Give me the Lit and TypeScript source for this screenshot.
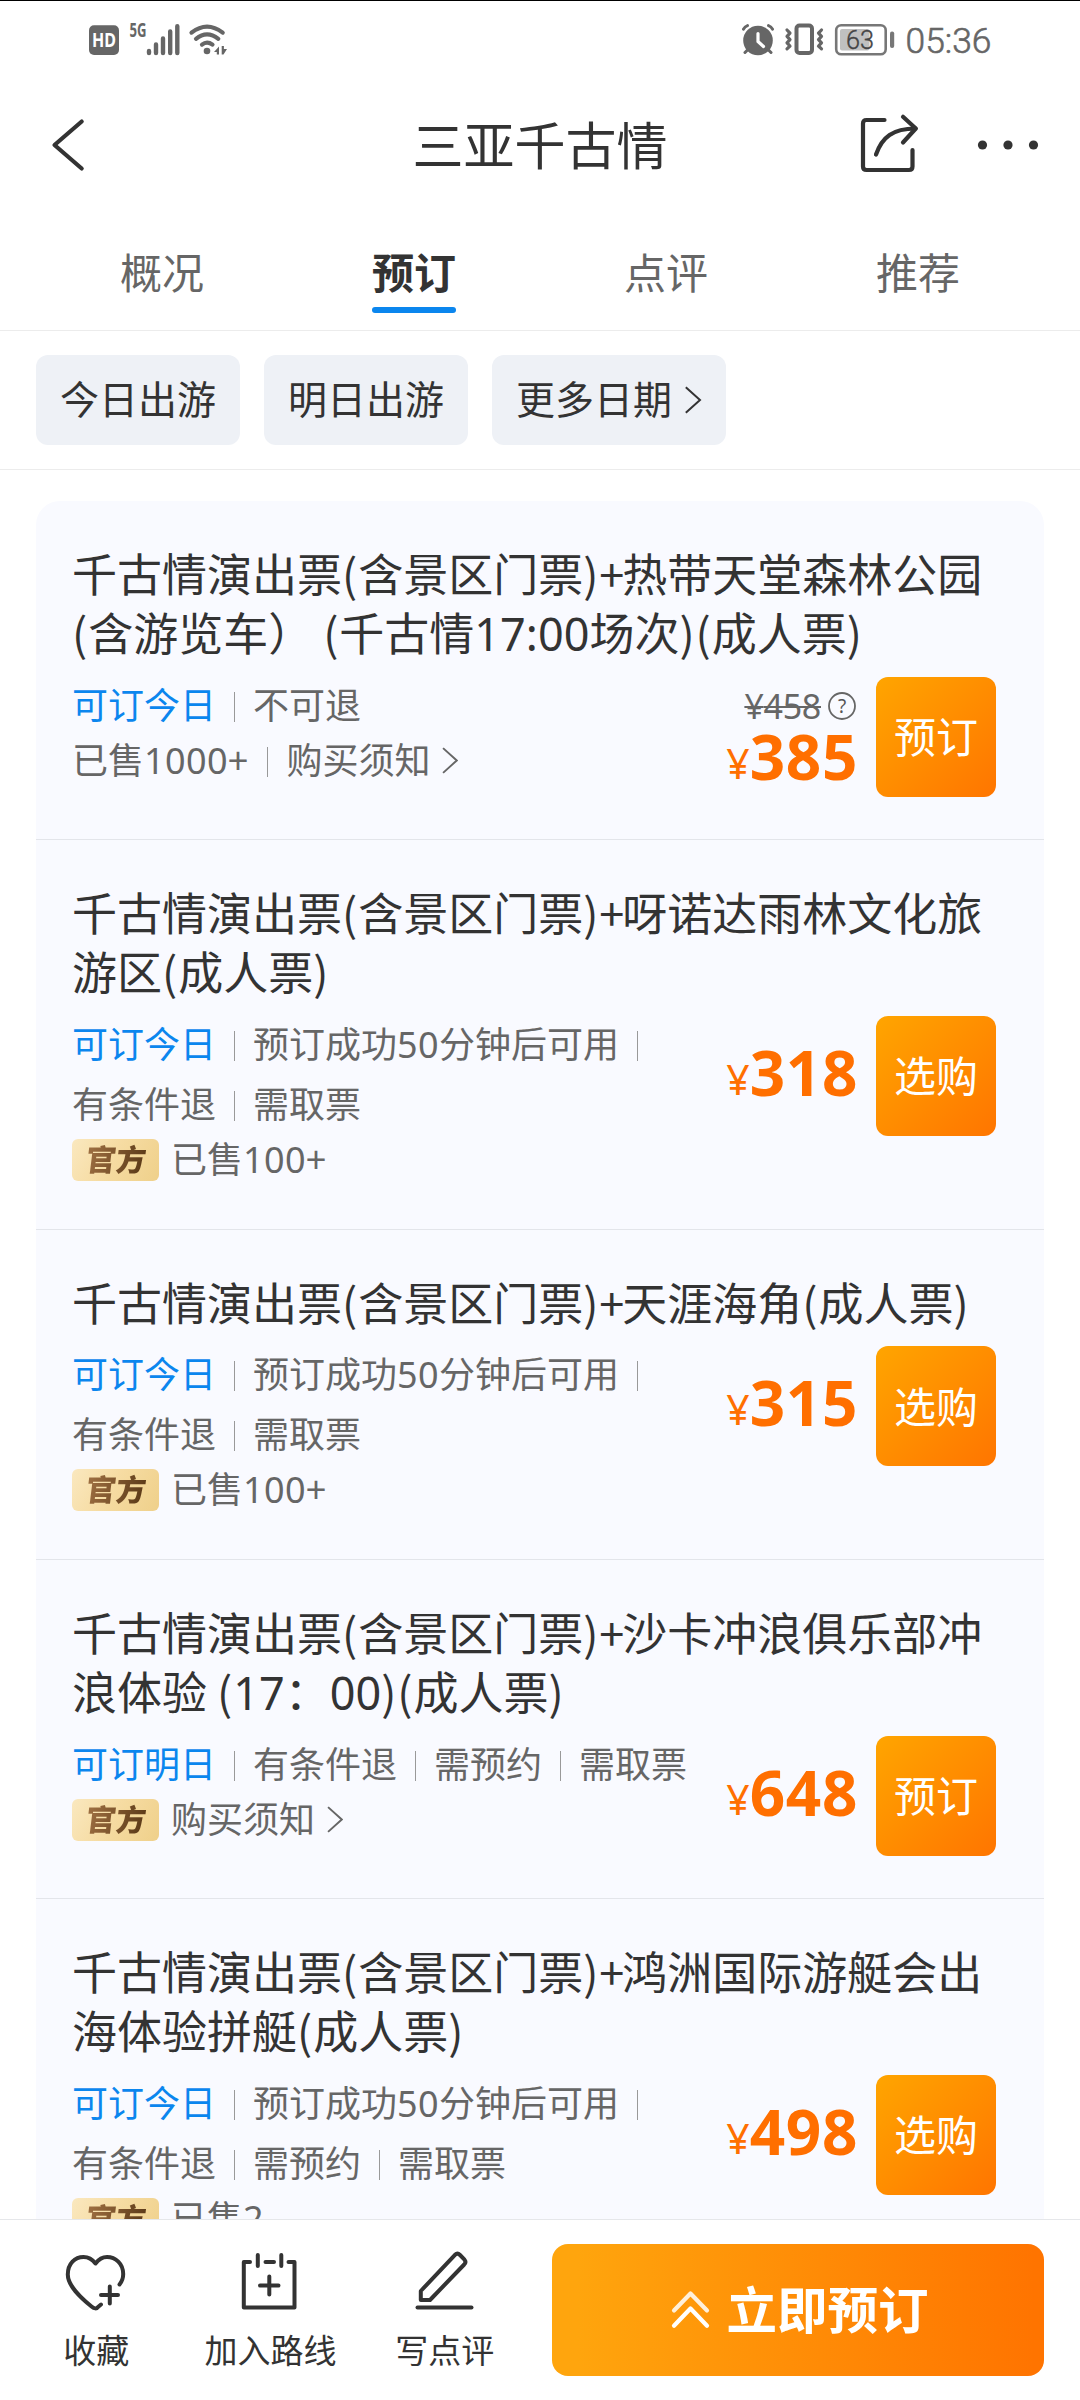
import { LitElement, html, css, svg, nothing } from "lit";
import { customElement, property } from "lit/decorators.js";

interface Ticket {
  title: string;
  when: string;
  tags: string[];
  official?: boolean;
  sold?: string;
  notice?: boolean;
  oldPrice?: string;
  price: string;
  action: string;
}

const tickets: Ticket[] = [
  {
    title: "千古情演出票(含景区门票)+热带天堂森林公园(含游览车） (千古情17:00场次)(成人票)",
    when: "可订今日",
    tags: ["不可退"],
    sold: "已售1000+",
    notice: true,
    oldPrice: "458",
    price: "385",
    action: "预订",
  },
  {
    title: "千古情演出票(含景区门票)+呀诺达雨林文化旅游区(成人票)",
    when: "可订今日",
    tags: ["预订成功50分钟后可用", "有条件退", "需取票"],
    official: true,
    sold: "已售100+",
    price: "318",
    action: "选购",
  },
  {
    title: "千古情演出票(含景区门票)+天涯海角(成人票)",
    when: "可订今日",
    tags: ["预订成功50分钟后可用", "有条件退", "需取票"],
    official: true,
    sold: "已售100+",
    price: "315",
    action: "选购",
  },
  {
    title: "千古情演出票(含景区门票)+沙卡冲浪俱乐部冲浪体验 (17：00)(成人票)",
    when: "可订明日",
    tags: ["有条件退", "需预约", "需取票"],
    official: true,
    notice: true,
    price: "648",
    action: "预订",
  },
  {
    title: "千古情演出票(含景区门票)+鸿洲国际游艇会出海体验拼艇(成人票)",
    when: "可订今日",
    tags: ["预订成功50分钟后可用", "有条件退", "需预约", "需取票"],
    official: true,
    sold: "已售2",
    price: "498",
    action: "选购",
  },
];

const runClass = (run: string) => (/\d/.test(run) ? "num" : run === "+" ? "plus" : "par");

/* Digits use the Latin face; parentheses and plus signs get their own spacing. */
const mixed = (text: string) =>
  text
    .split(/(\d[\d:]*|[()]+|\+)/)
    .map((part, i) => (i % 2 ? html`<span class=${runClass(part)}>${part}</span>` : part));

const chevron = (cls: string) => html`<svg class=${cls} viewBox="0 0 16 28">
  <path d="M0.8 1.2 L15 14 L0.8 26.8" fill="none" stroke="currentColor" stroke-width="2" />
</svg>`;

@customElement("status-bar")
class StatusBar extends LitElement {
  static styles = css`
    :host {
      display: flex;
      justify-content: space-between;
      height: 80px;
      box-sizing: border-box;
      border-top: 1px solid #000;
      padding: 21px 89px 0 89px;
      color: #666;
    }
    .group {
      display: flex;
      align-items: flex-start;
    }
    svg {
      display: block;
      height: 36px;
      overflow: visible;
    }
    .hd { width: 30px; margin-right: 11px; }
    .signal { width: 50px; margin-right: 9px; }
    .wifi { width: 38px; }
    .alarm { width: 34px; margin-right: 9px; }
    .vibrate { width: 38px; margin-right: 12px; }
    .battery { width: 60px; margin-right: 12px; }
    .clock { width: 84px; }
    .caps { font-family: "Noto Sans", sans-serif; font-weight: 700; }
    .time { font-family: "Roboto", sans-serif; font-weight: 300; }
  `;
  render() {
    return html`
      <div class="group">
        <svg class="hd" viewBox="89 22 30 36">
          <rect x="89" y="25.3" width="30" height="29.7" rx="5" fill="#666" />
          <text class="caps" x="104" y="47.3" font-size="19.2" fill="#fff" text-anchor="middle" textLength="24" lengthAdjust="spacingAndGlyphs">HD</text>
        </svg>
        <svg class="signal" viewBox="130 22 50 36">
          <text class="caps" x="129.500" y="37.2" font-size="19" fill="#666" textLength="17" lengthAdjust="spacingAndGlyphs">5G</text>
          <g stroke="#666" stroke-width="4.4" stroke-linecap="round">
            <path d="M149 51V53M156 44.500V53M163 38.500V53M170.200 31.500V53M177.300 26.200V53" />
          </g>
        </svg>
        <svg class="wifi" viewBox="189 22 38 36">
          <g fill="none" stroke="#666" stroke-width="4.200" stroke-linecap="round">
            <path d="M191.500 32.600Q207 20.500 222.700 32.600" />
            <path d="M196 38.800Q207 30 218.300 38.800" />
            <path d="M202 44.600Q207 40.600 212.500 44.600" />
          </g>
          <circle cx="207" cy="51" r="3.300" fill="#666" />
          <path d="M214 52l5-5.500V54.500h-2.200V52zM227 49l-3.500 5.500h-1.800V46h2.200v3z" fill="#666" />
        </svg>
      </div>
      <div class="group">
        <svg class="alarm" viewBox="742 22 34 36">
          <circle cx="758" cy="40.500" r="14.800" fill="#666" />
          <g fill="none" stroke="#666" stroke-width="3" stroke-linecap="round">
            <path d="M743.500 29.200Q744.800 26.500 747.500 25.600M772.500 29.200Q771.200 26.500 768.500 25.600" />
            <path d="M747.500 50l-2.500 2.500M768.500 50l2.500 2.500" />
          </g>
          <path d="M758 33.500V41.500L763.500 46.500" fill="none" stroke="#fff" stroke-width="3.200" stroke-linecap="round" />
        </svg>
        <svg class="vibrate" viewBox="785 22 38 36">
          <rect x="796.500" y="25.500" width="15.500" height="27.500" rx="3" fill="none" stroke="#666" stroke-width="4" />
          <g fill="none" stroke="#666" stroke-width="3.200" stroke-linecap="round" stroke-linejoin="round">
            <path d="M787 30l3 3.200-3 3.200 3 3.200-3 3.200 3 3.200-3 2.800" />
            <path d="M821.500 30l-3 3.200 3 3.200-3 3.200 3 3.200-3 3.200 3 2.800" />
          </g>
        </svg>
        <svg class="battery" viewBox="835 22 60 36">
          <rect x="836.200" y="25.200" width="49.500" height="29" rx="5" fill="none" stroke="#777" stroke-width="2.600" />
          <rect x="840" y="29" width="29.500" height="21.500" rx="2" fill="#c0c0c0" />
          <rect x="890" y="31.500" width="4.200" height="16.500" rx="2" fill="#777" />
          <text class="time" x="860" y="48.600" font-size="26" fill="#444" stroke="#444" stroke-width="0.400" text-anchor="middle" textLength="28" lengthAdjust="spacingAndGlyphs">63</text>
        </svg>
        <svg class="clock" viewBox="907 22 84 36">
          <text class="time" x="905.500" y="53" font-size="35.500" fill="#666" stroke="#666" stroke-width="0.600" textLength="86" lengthAdjust="spacingAndGlyphs">05:36</text>
        </svg>
      </div>
    `;
  }
}

@customElement("page-header")
class PageHeader extends LitElement {
  static styles = css`
    :host {
      display: grid;
      grid-template-columns: 1fr auto 1fr;
      align-items: center;
      height: 130px;
      padding: 0 40px 0 50px;
      box-sizing: border-box;
      color: #333;
    }
    .back { display: block; width: 36px; height: 56px; }
    .title {
      margin: 0;
      font-size: 51px;
      font-weight: 400;
      line-height: 70px;
      transform: translate(-5px, -2px);
    }
    .tools {
      display: flex;
      justify-content: flex-end;
      align-items: center;
      gap: 58px;
    }
    .share { width: 60px; height: 60px; }
    .more { width: 62px; height: 12px; }
    svg { display: block; overflow: visible; }
  `;
  render() {
    return html`
      <svg class="back" viewBox="50 117 36 56">
        <path d="M81.700 121.500L54.500 145L81.700 168.500" fill="none" stroke="#333" stroke-width="4.200" stroke-linecap="round" stroke-linejoin="round" />
      </svg>
      <h1 class="title">三亚千古情</h1>
      <div class="tools">
        <svg class="share" viewBox="860 115 60 60">
          <g fill="none" stroke="#333" stroke-width="4.200" stroke-linecap="round" stroke-linejoin="round">
            <path d="M884.500 120H866.500Q863 120 863 123.500V166.500Q863 170 866.500 170H909Q912.500 170 912.500 166.500V150" />
            <path d="M876 154.500C882 137 893 128.500 915.500 128.500" />
            <path d="M903 116.800L915.800 128.500L903 142.500" />
          </g>
        </svg>
        <svg class="more" viewBox="978 139 62 12">
          <circle cx="982.500" cy="145" r="4.600" fill="#333" />
          <circle cx="1008" cy="145" r="4.600" fill="#333" />
          <circle cx="1033.500" cy="145" r="4.600" fill="#333" />
        </svg>
      </div>
    `;
  }
}

@customElement("tab-bar")
class TabBar extends LitElement {
  static styles = css`
    :host {
      display: grid;
      grid-template-columns: repeat(4, 252px);
      justify-content: center;
      height: 121px;
      box-sizing: border-box;
      border-bottom: 1px solid #ececec;
      padding-top: 31px;
      color: #666;
      font-size: 42px;
      line-height: 60px;
    }
    .tab {
      display: flex;
      flex-direction: column;
      align-items: center;
      gap: 6px;
    }
    .active { color: #333; font-weight: 700; }
    .active::after {
      content: "";
      width: 84px;
      height: 6px;
      border-radius: 3px;
      background: #0b86ee;
    }
  `;
  render() {
    return ["概况", "预订", "点评", "推荐"].map(
      (t, i) => html`<div class=${i === 1 ? "tab active" : "tab"}>${t}</div>`
    );
  }
}

@customElement("date-filter")
class DateFilter extends LitElement {
  static styles = css`
    :host {
      display: flex;
      align-items: center;
      gap: 24px;
      height: 139px;
      box-sizing: border-box;
      border-bottom: 1px solid #ececec;
      padding: 0 36px;
      color: #333;
      font-size: 39px;
    }
    .chip {
      display: flex;
      align-items: center;
      gap: 12px;
      height: 90px;
      box-sizing: border-box;
      padding: 0 24px;
      border-radius: 12px;
      background: #eef1f6;
    }
    .label { line-height: 56px; transform: translateY(-3px); }
    .arrow { width: 18px; height: 28px; }
  `;
  render() {
    return html`
      <div class="chip"><span class="label">今日出游</span></div>
      <div class="chip"><span class="label">明日出游</span></div>
      <div class="chip"><span class="label">更多日期</span>${chevron("arrow")}</div>
    `;
  }
}

@customElement("ticket-item")
class TicketItem extends LitElement {
  @property({ attribute: false }) ticket!: Ticket;

  static styles = css`
    :host {
      display: block;
      padding: 42px 48px 42px 36px;
      border-bottom: 1px solid #e3e5ea;
      color: #666;
      font-size: 36px;
    }
    .title {
      margin: 0 0 15px;
      color: #333;
      font-size: 45px;
      font-weight: 400;
      line-height: 59.4px;
      text-spacing-trim: space-all;
    }
    .num {
      font-family: "Noto Sans", sans-serif;
      line-height: 1;
    }
    .par { letter-spacing: 0.9px; }
    .title .plus { letter-spacing: -2px; }
    .text .num { letter-spacing: 0.4px; }
    .text .plus { letter-spacing: 1.5px; }
    .body {
      display: flex;
      align-items: flex-start;
    }
    .info {
      flex: 1;
      min-width: 0;
      margin-top: -1px;
    }
    .tags {
      display: flex;
      flex-wrap: wrap;
    }
    .tag, .row {
      display: flex;
      align-items: center;
      white-space: nowrap;
    }
    .tag { height: 60px; }
    .when { color: #0b86ee; }
    .text { line-height: 50px; transform: translateY(-3px); }
    .sep {
      width: 1px;
      height: 30px;
      margin: 2px 18px 0;
      background: #999;
    }
    .row { height: 42px; padding: 4px 0 6px; }
    .badge {
      width: 87px;
      height: 42px;
      margin-right: 12px;
      border-radius: 6px;
      background: linear-gradient(120deg, #fae8bf 0%, #f6dca3 45%, #efd08a 100%);
      display: flex;
      align-items: center;
      justify-content: center;
    }
    .badge-text {
      font-size: 30px;
      font-weight: 900;
      line-height: 42px;
      transform: skewX(-7deg) translateY(-2px);
      background: linear-gradient(100deg, #9a6c3f 10%, #5f3d1a 90%);
      -webkit-background-clip: text;
      background-clip: text;
      color: transparent;
    }
    .arrow { width: 16px; height: 27px; margin-left: 12px; }
    .prices {
      display: flex;
      flex-direction: column;
      align-items: flex-end;
      justify-content: center;
      height: 120px;
      margin-right: 18px;
    }
    .old {
      display: flex;
      align-items: center;
      gap: 7px;
      height: 46px;
      margin-right: 2px;
      margin-top: -1px;
    }
    .old-num {
      font-family: "Noto Sans", sans-serif;
      font-size: 34px;
      line-height: 46px;
      letter-spacing: -0.3px;
      text-decoration: line-through;
      text-decoration-thickness: 2px;
    }
    .help { display: block; width: 28px; height: 28px; }
    .q { font-family: "Noto Sans", sans-serif; }
    .price {
      display: flex;
      align-items: baseline;
      color: #ff6f00;
      line-height: 60px;
      height: 68px;
    }
    .old + .price { height: 61px; line-height: 55px; }
    .yen {
      font-family: "Noto Sans", sans-serif;
      font-size: 41px;
      transform: translateY(-1.5px);
    }
    .amount {
      font-family: "Noto Sans", sans-serif;
      font-weight: 700;
      font-size: 62px;
      letter-spacing: 0.6px;
    }
    .buy {
      display: flex;
      align-items: center;
      justify-content: center;
      width: 120px;
      height: 120px;
      box-sizing: border-box;
      padding-bottom: 4px;
      border-radius: 12px;
      background: linear-gradient(135deg, #ffa500, #ff7500);
      color: #fff;
      font-size: 42px;
    }
  `;

  render() {
    const t = this.ticket;
    const last = t.tags.length - 1;
    return html`
      <h2 class="title">${mixed(t.title)}</h2>
      <div class="body">
        <div class="info">
          <div class="tags">
            <div class="tag"><span class="text when">${t.when}</span><i class="sep"></i></div>
            ${t.tags.map(
              (tag, i) => html`<div class="tag">
                <span class="text">${mixed(tag)}</span>${i < last ? html`<i class="sep"></i>` : nothing}
              </div>`
            )}
          </div>
          <div class="row">
            ${t.official ? html`<span class="badge"><span class="badge-text">官方</span></span>` : nothing}
            ${t.sold ? html`<span class="text">${mixed(t.sold)}</span>` : nothing}
            ${t.sold && t.notice ? html`<i class="sep"></i>` : nothing}
            ${t.notice ? html`<span class="text">购买须知</span>${chevron("arrow")}` : nothing}
          </div>
        </div>
        <div class="prices">
          ${t.oldPrice
            ? html`<div class="old">
                <span class="old-num">¥${t.oldPrice}</span>
                <svg class="help" viewBox="0 0 28 28">
                  <circle cx="14" cy="14" r="13" fill="none" stroke="#666" stroke-width="1.800" />
                  <text class="q" x="14" y="21" font-size="19" text-anchor="middle" fill="#555">?</text>
                </svg>
              </div>`
            : nothing}
          <div class="price"><span class="yen">¥</span><span class="amount">${t.price}</span></div>
        </div>
        <div class="buy">${t.action}</div>
      </div>
    `;
  }
}

@customElement("action-bar")
class ActionBar extends LitElement {
  static styles = css`
    :host {
      display: flex;
      justify-content: space-between;
      flex: none;
      height: 181px;
      box-sizing: border-box;
      border-top: 1px solid #e6e7ea;
      padding: 24px 36px 24px 9px;
      background: #fff;
      color: #333;
    }
    .items {
      display: grid;
      grid-template-columns: repeat(3, 174.300px);
    }
    .item {
      display: flex;
      flex-direction: column;
      align-items: center;
      gap: 13px;
      padding-top: 6px;
      font-size: 33px;
      line-height: 48px;
    }
    .icon { width: 62px; height: 62px; display: block; overflow: visible; }
    .book {
      display: flex;
      align-items: center;
      justify-content: center;
      gap: 14px;
      width: 492px;
      height: 132px;
      box-sizing: border-box;
      padding-right: 3px;
      border-radius: 16px;
      background: linear-gradient(90deg, #ffa50d 5%, #ff7400 98%);
      color: #fff;
      font-size: 50.5px;
      font-weight: 700;
    }
    .up { width: 48px; height: 48px; }
    .label { line-height: 70px; transform: translateY(-3px); }
  `;
  private icon(paths: unknown, box: string) {
    return html`<svg class="icon" viewBox=${box}>
      <g fill="none" stroke="#333" stroke-width="4" stroke-linecap="round" stroke-linejoin="round">${paths}</g>
    </svg>`;
  }
  render() {
    return html`
      <div class="items">
        <div class="item">
          ${this.icon(
            svg`<path d="M120 2285.500Q123.700 2281 123.700 2275C123.700 2264.500 116 2258 107.500 2258C102.500 2258 99 2260.500 96 2264.500C93 2260.500 89 2258 84 2258C75.500 2258 68.300 2264.500 68.300 2275.500C68.300 2287 81 2298.500 92 2307.500Q96.300 2311 98.500 2308L101.500 2305.500" />
            <path d="M101.500 2296H118.500M110.300 2287.500V2304.500" />`,
            "65.5 2251 62 62"
          )}
          收藏
        </div>
        <div class="item">
          ${this.icon(
            svg`<path d="M250.500 2263H244.300V2308.500H295V2263H289M266 2263H274.500M258.300 2256V2267M281.800 2256V2267" />
            <path d="M260.500 2286.500H279M269.800 2277.500V2295.500" />`,
            "239.5 2251 62 62"
          )}
          加入路线
        </div>
        <div class="item">
          ${this.icon(
            svg`<path d="M420.300 2301V2292L454.500 2255.800Q457 2253.500 459.500 2256L464 2260.700Q466 2263 463.700 2265.500L429.500 2301Z" />
            <path d="M417 2308.500H471" />`,
            "413.5 2251 62 62"
          )}
          写点评
        </div>
      </div>
      <div class="book">
        <svg class="up" viewBox="665 2287 48 48">
          <g fill="none" stroke-width="4.200" stroke-linecap="round" stroke-linejoin="round">
            <path d="M674 2311.500L690.500 2294.500L707 2311.500" stroke="#fff" stroke-opacity="0.850" />
            <path d="M674 2326.800L690.500 2309.500L707 2326.800" stroke="#fff" />
          </g>
        </svg>
        <span class="label">立即预订</span>
      </div>
    `;
  }
}

@customElement("app-root")
class AppRoot extends LitElement {
  static styles = css`
    :host {
      display: flex;
      flex-direction: column;
      width: 1080px;
      height: 2400px;
      overflow: hidden;
      background: #fff;
      font-family: "Noto Sans CJK SC", sans-serif;
    }
    .head { flex: none; }
    .scroll {
      flex: 1;
      min-height: 0;
      overflow: hidden;
      padding: 31px 36px 0;
    }
    .list {
      border-radius: 24px 24px 0 0;
      background: #f9faff;
    }
  `;
  render() {
    return html`
      <div class="head">
        <status-bar></status-bar>
        <page-header></page-header>
        <tab-bar></tab-bar>
        <date-filter></date-filter>
      </div>
      <div class="scroll">
        <div class="list">${tickets.map((t) => html`<ticket-item .ticket=${t}></ticket-item>`)}</div>
      </div>
      <action-bar></action-bar>
    `;
  }
}
